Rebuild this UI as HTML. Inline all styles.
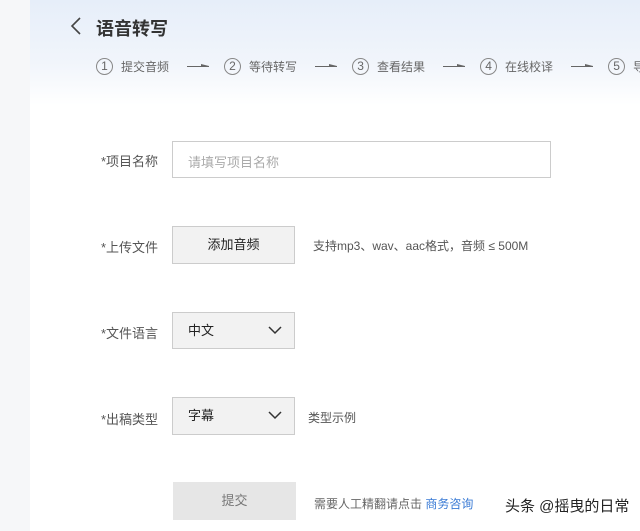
<!DOCTYPE html>
<html><head><meta charset="utf-8"><style>
*{margin:0;padding:0;box-sizing:border-box}
html,body{width:640px;height:531px;overflow:hidden}
body{background:#fff;font-family:"Liberation Sans","Noto Sans CJK SC",sans-serif;position:relative}
.side{position:absolute;left:0;top:0;width:30px;height:531px;background:#f6f7f9}
.hdr{position:absolute;left:30px;top:0;width:610px;height:105px;background:linear-gradient(180deg,#e6eef9 0%,#f1f5fb 60%,#fff 100%)}
.abs{position:absolute;white-space:nowrap}
.title{left:96px;top:15px;font-size:18px;font-weight:bold;color:#333}
.steps{left:96px;top:58px;width:544px;overflow:hidden;font-size:12px;color:#666;display:flex;align-items:center}
.c{display:inline-block;flex:none;width:17px;height:17px;border:1px solid #888;border-radius:50%;text-align:center;line-height:15px;font-size:12px;color:#666;margin-right:8px}
.ar{display:inline-block;flex:none;width:22px;height:1px;background:#666;margin:0 15px 0 18px;position:relative}
.ar:after{content:"";position:absolute;right:0;top:-2px;border-left:8px solid #666;border-top:2px solid transparent;border-bottom:0}
.lbl{font-size:13px;color:#555;text-align:right;width:100px;left:58px}
.box{border:1px solid #ccc;background:#fff}
.btn{background:#f2f2f2;border:1px solid #ccc;font-size:13px;color:#222;text-align:center}
.note{font-size:12px;color:#555}
</style></head><body>
<div class="side"></div><div class="hdr"></div>
<svg class="abs" style="left:70px;top:17px" width="12" height="18" viewBox="0 0 12 18"><path d="M10 1 L2 9 L10 17" fill="none" stroke="#444" stroke-width="1.6"/></svg>
<div class="abs title">语音转写</div>
<div class="abs steps"><span class="c">1</span>提交音频<span class="ar"></span><span class="c">2</span>等待转写<span class="ar"></span><span class="c">3</span>查看结果<span class="ar"></span><span class="c">4</span>在线校译<span class="ar"></span><span class="c">5</span>导</div>

<div class="abs lbl" style="top:151px">*项目名称</div>
<div class="abs box" style="left:172px;top:141px;width:379px;height:37px;font-size:13px;color:#aaa;padding:10px 0 0 15px">请填写项目名称</div>

<div class="abs lbl" style="top:237px">*上传文件</div>
<div class="abs btn" style="left:172px;top:226px;width:123px;height:38px;line-height:36px">添加音频</div>
<div class="abs note" style="left:313px;top:237px">支持mp3、wav、aac格式，音频 ≤ 500M</div>

<div class="abs lbl" style="top:323px">*文件语言</div>
<div class="abs btn" style="left:172px;top:312px;width:123px;height:37px;line-height:35px;text-align:left;padding-left:15px">中文</div>
<svg class="abs" style="left:268px;top:326px" width="14" height="9"><path d="M1 1 L7 7 L13 1" fill="none" stroke="#333" stroke-width="1.5"/></svg>

<div class="abs lbl" style="top:409px">*出稿类型</div>
<div class="abs btn" style="left:172px;top:397px;width:123px;height:38px;line-height:36px;text-align:left;padding-left:15px">字幕</div>
<svg class="abs" style="left:268px;top:411px" width="14" height="9"><path d="M1 1 L7 7 L13 1" fill="none" stroke="#333" stroke-width="1.5"/></svg>
<div class="abs note" style="left:308px;top:409px">类型示例</div>

<div class="abs" style="left:173px;top:482px;width:123px;height:38px;background:#e6e6e6;font-size:13px;color:#777;text-align:center;line-height:38px">提交</div>
<div class="abs note" style="left:314px;top:495px;color:#666">需要人工精翻请点击 <span style="color:#3a7bd5">商务咨询</span></div>
<div class="abs" style="left:505px;top:495px;font-size:15px;color:#222">头条 @摇曳的日常</div>
</body></html>
